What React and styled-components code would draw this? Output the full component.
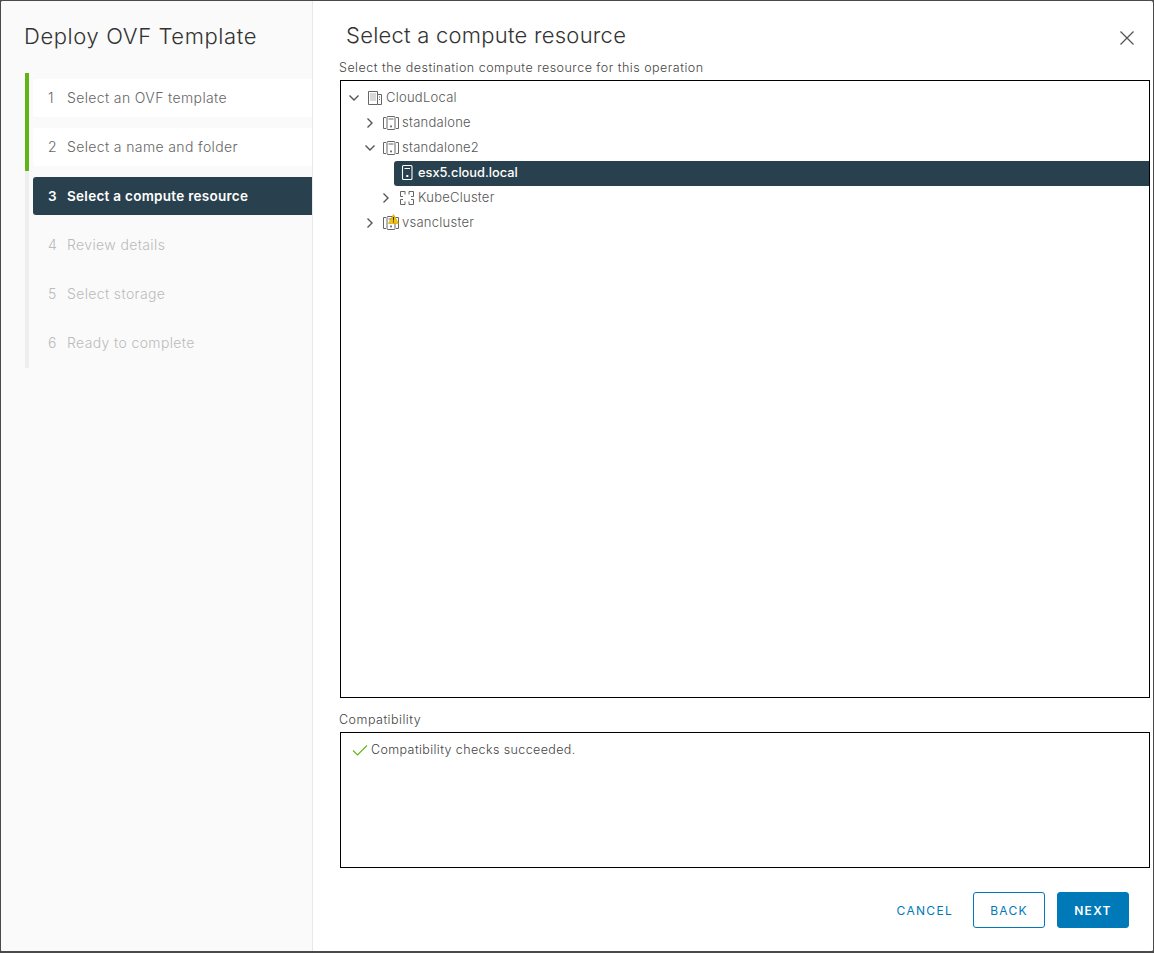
import React from "react";
import styled, { createGlobalStyle } from "styled-components";

const GlobalStyle = createGlobalStyle`
  html, body {
    margin: 0;
    background: #4a4a4a;
  }
  body {
    font-family: "Inter", "Liberation Sans", sans-serif;
    color: #565656;
  }
  * {
    box-sizing: border-box;
  }
`;

const Dialog = styled.div`
  width: 1154px;
  height: 953px;
  display: flex;
  background: #fff;
  border: 1px solid #4a4a4a;
  border-bottom-width: 2px;
  border-radius: 3px;
  overflow: hidden;
`;

const Sidebar = styled.div`
  width: 312px;
  flex: none;
  padding: 22px 0 0 24px;
  background: #fafafa;
  border-right: 1px solid #e8e8e8;
`;

const SideTitle = styled.h1`
  margin: 0 0 24px -1px;
  font-size: 22px;
  line-height: 26px;
  font-weight: 300;
  letter-spacing: 0.6px;
  color: #333;
`;

const Steps = styled.ol`
  list-style: none;
  margin: 0;
  padding: 0;
`;

const Step = styled.li`
  padding: ${(p) => p.$top}px 0 ${(p) => p.$bottom}px 4px;
  border-left: 4px solid ${(p) => (p.$done ? "#60b515" : "#eeeeee")};
`;

const StepInner = styled.div`
  height: 38px;
  display: flex;
  align-items: center;
  padding: ${(p) => (p.$active ? "0" : "0 0 2px")} 15px;
  border-radius: 3px 0 0 3px;
  font-size: ${(p) => (p.$active ? "13.5px" : "14px")};
  font-weight: ${(p) => (p.$active ? 600 : 300)};
  letter-spacing: ${(p) => (p.$active ? "0.28px" : "0.37px")};
  background: ${(p) => (p.$active ? "#29414e" : p.$done ? "#fff" : "transparent")};
  color: ${(p) => (p.$active ? "#fff" : p.$done ? "#666" : "#bbb")};
`;

const StepNumber = styled.span`
  width: 19px;
  flex: none;
`;

const Main = styled.div`
  flex: 1;
  min-width: 0;
  display: flex;
  flex-direction: column;
  padding: 0 3px 0 26px;
`;

const Header = styled.div`
  display: flex;
  justify-content: space-between;
  padding: 20px 15px 0 7px;
  height: 58px;
`;

const Title = styled.h2`
  margin: 0;
  font-size: 22px;
  line-height: 28px;
  font-weight: 300;
  letter-spacing: 0.24px;
  color: #333;
`;

const CloseButton = styled.button`
  width: 16px;
  height: 16px;
  margin-top: 9px;
  padding: 0;
  border: 0;
  background: none;
  color: #555;
`;

const Label = styled.div`
  margin-top: ${(p) => p.$gap}px;
  font-size: 12.5px;
  line-height: 15px;
  font-weight: 300;
  letter-spacing: 0.49px;
  color: #444;
`;

const Box = styled.div`
  margin: 5px 0 0 1px;
  height: ${(p) => p.$height}px;
  border: 1px solid #000;
  background: #fff;
  flex: none;
`;

const Tree = styled.div`
  padding-top: 5px;
`;

const TreeRow = styled.div`
  height: 25px;
  display: flex;
  align-items: stretch;
  padding-left: ${(p) => 6 + p.$level * 16}px;
`;

const ChevronSlot = styled.span`
  width: 14px;
  flex: none;
  display: flex;
  align-items: center;
  justify-content: center;
  margin-right: 1px;
  padding-bottom: 1px;
  color: #555;
`;

const Node = styled.div`
  flex: 1;
  display: flex;
  align-items: center;
  gap: 3px;
  padding: 0 0 3px 5px;
  font-size: ${(p) => (p.$selected ? "12.8px" : "13px")};
  font-weight: ${(p) => (p.$selected ? 500 : 300)};
  letter-spacing: ${(p) => (p.$selected ? "0" : "0.25px")};
  border-radius: 3px 0 0 3px;
  background: ${(p) => (p.$selected ? "#29414e" : "transparent")};
  color: ${(p) => (p.$selected ? "#fff" : "#565656")};
`;

const IconSlot = styled.span`
  position: relative;
  width: 16px;
  height: 16px;
  flex: none;
  color: ${(p) => (p.$selected ? "#fff" : "#666")};
`;

const WarnBadge = styled.svg`
  position: absolute;
  top: 0;
  left: 5px;
`;

const Message = styled.div`
  display: flex;
  align-items: center;
  gap: 3px;
  padding: 9px 0 0 11px;
  font-size: 12.5px;
  line-height: 16px;
  font-weight: 300;
  letter-spacing: 0.39px;
  color: #444;
`;

const Footer = styled.div`
  display: flex;
  justify-content: flex-end;
  align-items: center;
  gap: 12px;
  margin-top: 24px;
  padding-right: 21px;
`;

const Button = styled.button`
  height: 36px;
  width: ${(p) => (p.$flat ? "auto" : "72px")};
  padding: 0;
  margin-right: ${(p) => (p.$flat ? "8px" : "0")};
  border: ${(p) => (p.$flat ? "0" : "1px solid #0079b8")};
  border-radius: 3px;
  font-family: inherit;
  font-size: 12px;
  font-weight: ${(p) => (p.$primary ? 600 : 400)};
  letter-spacing: 1.3px;
  text-transform: uppercase;
  background: ${(p) => (p.$primary ? "#0079b8" : "transparent")};
  color: ${(p) => (p.$primary ? "#fff" : "#0079b8")};
`;

const ChevronIcon = ({ open }) => (
  <svg width="12" height="12" viewBox="0 0 12 12" fill="none" stroke="currentColor" strokeWidth="1.4">
    {open ? <path d="M1.5 3.5 L6 8 L10.5 3.5" /> : <path d="M3.5 1.5 L8 6 L3.5 10.5" />}
  </svg>
);

const CloseIcon = () => (
  <svg width="16" height="16" viewBox="0 0 16 16" stroke="currentColor" strokeWidth="1.3">
    <path d="M1.5 1.5 L14.5 14.5 M14.5 1.5 L1.5 14.5" />
  </svg>
);

const CheckIcon = () => (
  <svg width="16" height="12" viewBox="0 0 16 12" fill="none" stroke="#60b515" strokeWidth="1.1">
    <path d="M1 6.5 L5.5 11 L15 1.5" />
  </svg>
);

const DatacenterIcon = () => (
  <svg width="16" height="16" viewBox="0 0 16 16" fill="none" stroke="currentColor" strokeWidth="1">
    <path d="M1.5 15.5 V2.5 H10.5 V15.5 Z M10.5 5.5 H14.5 V15.5 H10.5" />
    <path d="M3.5 5 H8.5 M3.5 7 H8.5 M3.5 9 H8.5 M3.5 11 H8.5 M12 8 H13.5 M12 10.5 H13.5" strokeDasharray="1 1" />
  </svg>
);

const HostIcon = () => (
  <svg width="16" height="16" viewBox="0 0 16 16" fill="none" stroke="currentColor" strokeWidth="1.1">
    <rect x="3.5" y="1.5" width="9.5" height="14" rx="1" />
    <path d="M5.5 4.5 H11" />
    <rect x="7.3" y="11" width="2" height="2" fill="currentColor" stroke="none" />
  </svg>
);

const ClusterIcon = () => (
  <svg width="16" height="16" viewBox="0 0 16 16" fill="none" stroke="currentColor" strokeWidth="1">
    <path d="M3 3.5 H0.5 V14.5 H3 M13 3.5 H15.5 V14.5 H13" />
    <rect x="4" y="2.5" width="8" height="13" rx="1" />
    <path d="M5.5 5 H10.5" />
    <rect x="7.1" y="11.5" width="1.8" height="1.8" fill="currentColor" stroke="none" />
  </svg>
);

const KubeIcon = () => (
  <svg width="16" height="16" viewBox="0 0 16 16" fill="none" stroke="currentColor" strokeWidth="1">
    <path d="M1.5 7.5 V2.5 H6 V5.5 M10 5.5 V2.5 H14.5 V7.5 M1.5 10.5 V15.5 H6 V12.5 M10 12.5 V15.5 H14.5 V10.5" />
    <path d="M1.5 7.5 H4 M12 7.5 H14.5 M1.5 10.5 H4 M12 10.5 H14.5" />
  </svg>
);

const WarningIcon = () => (
  <WarnBadge width="11" height="10" viewBox="0 0 11 10">
    <path d="M5.5 0.5 L10.6 9.5 H0.4 Z" fill="#fac400" stroke="#c9a000" strokeWidth="0.6" strokeLinejoin="round" />
    <path d="M5.5 3 V6.4 M5.5 7.2 V8.4" stroke="#333" strokeWidth="1.1" />
  </WarnBadge>
);

const steps = [
  { label: "Select an OVF template", done: true, top: 6, bottom: 6 },
  { label: "Select a name and folder", done: true, top: 5, bottom: 5 },
  { label: "Select a compute resource", active: true, top: 6, bottom: 5 },
  { label: "Review details", top: 6, bottom: 5 },
  { label: "Select storage", top: 6, bottom: 5 },
  { label: "Ready to complete", top: 6, bottom: 6 },
];

const nodes = [
  { label: "CloudLocal", level: 0, open: true, icon: DatacenterIcon },
  { label: "standalone", level: 1, icon: ClusterIcon },
  { label: "standalone2", level: 1, open: true, icon: ClusterIcon },
  { label: "esx5.cloud.local", level: 2, leaf: true, selected: true, icon: HostIcon },
  { label: "KubeCluster", level: 2, icon: KubeIcon },
  { label: "vsancluster", level: 1, warning: true, icon: ClusterIcon },
];

const App = () => {
  return (
    <React.Fragment>
      <GlobalStyle />
      <Dialog>
        <Sidebar>
          <SideTitle>Deploy OVF Template</SideTitle>
          <Steps>
            {steps.map((step, i) => (
              <Step key={step.label} $done={step.done} $top={step.top} $bottom={step.bottom}>
                <StepInner $done={step.done} $active={step.active}>
                  <StepNumber>{i + 1}</StepNumber>
                  {step.label}
                </StepInner>
              </Step>
            ))}
          </Steps>
        </Sidebar>
        <Main>
          <Header>
            <Title>Select a compute resource</Title>
            <CloseButton aria-label="Close">
              <CloseIcon />
            </CloseButton>
          </Header>
          <Label $gap={1}>Select the destination compute resource for this operation</Label>
          <Box $height={618}>
            <Tree>
              {nodes.map((node) => {
                const NodeIcon = node.icon;
                return (
                  <TreeRow key={node.label} $level={node.level}>
                    <ChevronSlot>{!node.leaf && <ChevronIcon open={node.open} />}</ChevronSlot>
                    <Node $selected={node.selected}>
                      <IconSlot $selected={node.selected}>
                        <NodeIcon />
                        {node.warning && <WarningIcon />}
                      </IconSlot>
                      {node.label}
                    </Node>
                  </TreeRow>
                );
              })}
            </Tree>
          </Box>
          <Label $gap={14}>Compatibility</Label>
          <Box $height={136}>
            <Message>
              <CheckIcon />
              Compatibility checks succeeded.
            </Message>
          </Box>
          <Footer>
            <Button $flat>Cancel</Button>
            <Button>Back</Button>
            <Button $primary>Next</Button>
          </Footer>
        </Main>
      </Dialog>
    </React.Fragment>
  );
};

export default App;
